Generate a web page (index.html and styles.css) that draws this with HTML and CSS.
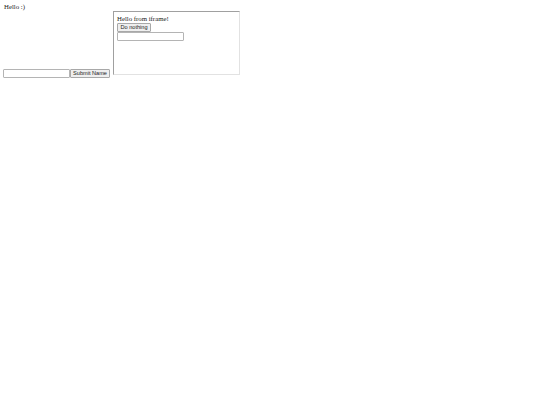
FILE: index.html
```html
<!DOCTYPE html>
<html>
<head>
<meta charset="utf-8">
<title>Hello</title>
<link rel="stylesheet" href="styles.css">
</head>
<body class="page">
<div class="greeting">Hello :)</div>
<form class="name-form"><input class="field" type="text"><button class="btn" type="button">Submit Name</button><div class="frame"><div class="frame-body"><div class="frame-text">Hello from iframe!</div><button class="btn" type="button">Do nothing</button><br><input class="field" type="text"></div></div></form>
</body>
</html>
```
FILE: styles.css
```css
html {
  background: #ffffff;
}
.page {
  margin: 3px 3px;
  font-family: "Liberation Serif", "Times New Roman", serif;
  font-size: 6.8px;
  line-height: 8px;
  color: #222;
}
.greeting {
  padding-left: 1px;
}
.name-form {
  margin: 0;
  line-height: 8px;
}
.field {
  box-sizing: border-box;
  font-family: "Liberation Sans", Arial, sans-serif;
  font-size: 5.6px;
  width: 67px;
  height: 9px;
  padding: 0 1px;
  margin: 0;
  border: 1px solid #b4b4b4;
  border-radius: 1px;
  background: #fff;
  vertical-align: baseline;
}
.btn {
  box-sizing: border-box;
  font-family: "Liberation Sans", Arial, sans-serif;
  font-size: 5.6px;
  line-height: 7px;
  height: 9px;
  padding: 0 2px;
  margin: 0;
  border: 1px solid #a8a8a8;
  border-radius: 1px;
  background: #efefef;
  color: #222;
  vertical-align: baseline;
}
.name-form > .btn {
  width: 40px;
}
.frame {
  box-sizing: border-box;
  display: inline-block;
  width: 127px;
  height: 64px;
  border: 1px solid;
  border-color: #a0a0a0 #e2e2e2 #e2e2e2 #a0a0a0;
  overflow: hidden;
  vertical-align: baseline;
  margin-left: 3px;
}
.frame-body {
  padding: 3px 3px;
  line-height: 7.5px;
}
.frame-body .btn {
  width: 34px;
  margin-top: 0.5px;
}
.frame-body .field {
  width: 67px;
  margin-top: 0;
}
```
